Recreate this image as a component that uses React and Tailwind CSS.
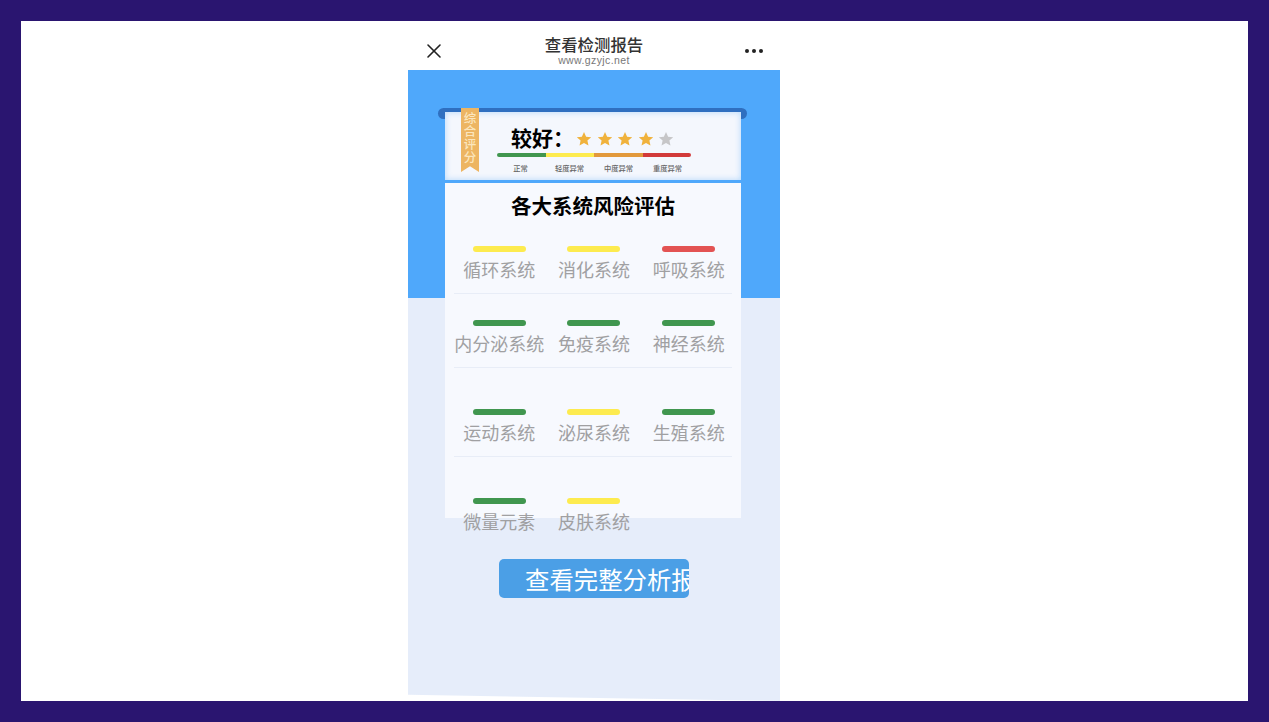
import React from 'react';
import { X } from 'lucide-react';

const YELLOW = 'bg-[#fdeb4f]';
const GREEN = 'bg-[#40964f]';
const RED = 'bg-[#e35353]';

const rows = [
    { top: 'pt-[27px]', divider: true, items: [['循环系统', YELLOW], ['消化系统', YELLOW], ['呼吸系统', RED]] },
    { top: 'pt-[26px]', divider: true, items: [['内分泌系统', GREEN], ['免疫系统', GREEN], ['神经系统', GREEN]] },
    { top: 'pt-[41px]', divider: true, items: [['运动系统', GREEN], ['泌尿系统', YELLOW], ['生殖系统', GREEN]] },
    { top: 'pt-[41px]', divider: false, items: [['微量元素', GREEN], ['皮肤系统', YELLOW]] },
];

const legend = [
    ['正常', 'bg-[#40964f]'],
    ['轻度异常', 'bg-[#fdeb4f]'],
    ['中度异常', 'bg-[#e2993c]'],
    ['重度异常', 'bg-[#d23a3a]'],
];

const Star = ({ on }) => (
    <svg viewBox="0 0 24 24" className={`w-[16px] h-[16px] ${on ? 'text-[#f0b23c]' : 'text-[#c6c6c8]'}`}>
        <path fill="currentColor" d="M12 1.5l3.2 7 7.6.8-5.7 5.1 1.6 7.5L12 18.1l-6.7 3.8 1.6-7.5L1.2 9.3l7.6-.8z" />
    </svg>
);

const App = () => {
    return (
        <div
            className="w-full h-[722px] bg-[#2a1570] p-[21px] overflow-hidden"
            style={{ fontFamily: '"Noto Sans CJK SC", "Noto Sans", sans-serif' }}
        >
            <div className="h-[680px] bg-white pl-[387px]">
                <div className="w-[372px]">
                    {/* Header */}
                    <div className="h-[49px] flex items-center justify-between pl-[14px] pr-[17px]">
                        <X size={24} strokeWidth={1.6} className="text-[#222222] mt-[10px]" />
                        <div className="flex flex-col items-center pt-[8px] mr-[3px]">
                            <div className="text-[16.4px] leading-[20px] font-medium text-[#333333]">查看检测报告</div>
                            <div className="text-[10.5px] leading-[12px] tracking-[0.4px] text-[#777777]" style={{ fontFamily: '"Liberation Sans", sans-serif' }}>www.gzyjc.net</div>
                        </div>
                        <div className="flex gap-[3px] mt-[11px]">
                            <span className="w-[4px] h-[4px] rounded-full bg-[#222222]"></span>
                            <span className="w-[4px] h-[4px] rounded-full bg-[#222222]"></span>
                            <span className="w-[4px] h-[4px] rounded-full bg-[#222222]"></span>
                        </div>
                    </div>

                    {/* Body */}
                    <div className="h-[631px] pt-[38px] bg-[linear-gradient(#4fa8fb_0,#4fa8fb_228px,#e6edfa_228px)] [clip-path:polygon(0_0,100%_0,100%_100%,0_99%)]">
                        {/* Score card */}
                        <div className="ml-[30px] w-[309px] h-[11px] rounded-full bg-[#2f6fc0]"></div>
                        <div className="relative ml-[37px] w-[296px] h-[68px] -mt-[7px] bg-[#f4f7fd] shadow-[inset_0_0_6px_rgba(79,168,251,0.4)]">
                            {/* Ribbon */}
                            <div className="absolute left-[16px] -top-[4px] w-[18px] h-[64px] bg-[#edb562] [clip-path:polygon(0_0,100%_0,100%_100%,50%_91%,0_100%)] flex justify-center pt-[3px]">
                                <div className="w-[13px] text-center break-all text-[12.5px] leading-[13px] font-medium text-[#fbe6bd]">综合评分</div>
                            </div>
                            <div className="pl-[52px]">
                                <div className="flex items-center pl-[14px] pt-[13px] h-[40px]">
                                    <span className="text-[21px] leading-[28px] font-bold text-black w-[65px] whitespace-nowrap -mt-[3px]">较好：</span>
                                    <div className="flex gap-[4.6px]">
                                        <Star on />
                                        <Star on />
                                        <Star on />
                                        <Star on />
                                        <Star />
                                    </div>
                                </div>
                                <div className="flex w-[194px] h-[4.5px] mt-[0.5px] rounded-full overflow-hidden">
                                    {legend.map(([name, color]) => (
                                        <div key={name} className={`flex-1 ${color}`}></div>
                                    ))}
                                </div>
                                <div className="flex w-[196px] -ml-[1px] mt-[6px]">
                                    {legend.map(([name]) => (
                                        <div key={name} className="flex-1 text-center text-[7.3px] leading-[10px] font-medium text-[#666666]">{name}</div>
                                    ))}
                                </div>
                            </div>
                        </div>

                        {/* Systems card */}
                        <div className="ml-[37px] mt-[3px] w-[296px] h-[335px] bg-[#f7f9fe]">
                            <div className="pt-[9px] text-center text-[20.5px] leading-[27px] font-bold text-black">各大系统风险评估</div>
                            <div>
                                {rows.map((row) => (
                                    <div key={row.items[0][0]} className={row.top}>
                                        <div className="grid grid-cols-3 pl-[7px] pr-[5px]">
                                            {row.items.map(([name, color]) => (
                                                <div key={name} className="flex flex-col items-center">
                                                    <div className={`w-[53px] h-[6px] rounded-full ${color}`}></div>
                                                    <div className="mt-[5px] h-[24px] text-[18px] leading-[24px] text-[#a0a0a2] whitespace-nowrap">{name}</div>
                                                </div>
                                            ))}
                                        </div>
                                        {row.divider && <div className="mt-[12px] mx-[9px] h-[1px] bg-[#e8edf7]"></div>}
                                    </div>
                                ))}
                            </div>
                        </div>

                        {/* Button */}
                        <div className="ml-[91px] mt-[41px] w-[190px] h-[39px] rounded-[5px] bg-[#4b9fe6] pl-[26px] overflow-hidden whitespace-nowrap text-[24.4px] leading-[39px] text-white">
                            查看完整分析报告
                        </div>
                    </div>
                </div>
            </div>
        </div>
    );
};

export default App;
